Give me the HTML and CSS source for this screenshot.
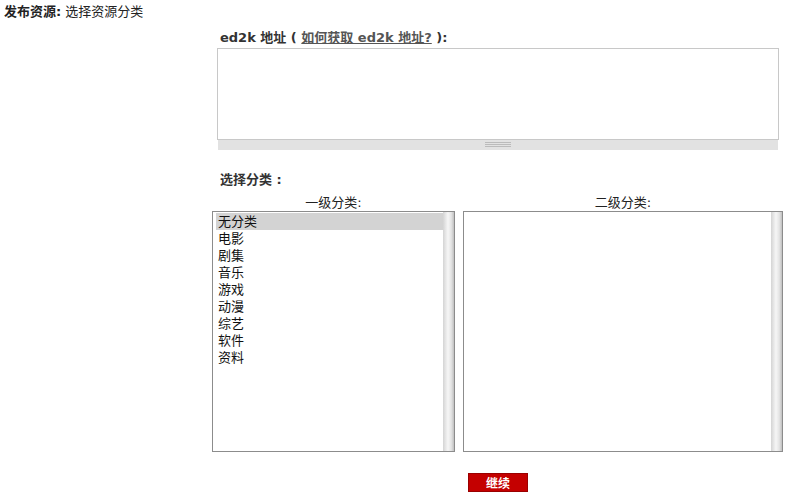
FILE: index.html
```html
<!DOCTYPE html>
<html lang="zh-CN">
<head>
    <meta charset="UTF-8">
    <title>发布资源</title>
    <link rel="stylesheet" href="styles.css">
</head>
<body>
    <div class="page-title"><b>发布资源:</b> 选择资源分类</div>

    <div class="form">
        <div class="label">ed2k 地址 ( <a href="#">如何获取 ed2k 地址?</a> ):</div>
        <div class="ed2k-box">
            <div class="ed2k-area"></div>
            <div class="grip"><span></span></div>
        </div>

        <div class="label cat-label">选择分类 :</div>

        <div class="cats">
            <div class="cat-col">
                <div class="cat-title">一级分类:</div>
                <div class="list first">
                    <div class="items">
                        <div class="item selected">无分类</div>
                        <div class="item">电影</div>
                        <div class="item">剧集</div>
                        <div class="item">音乐</div>
                        <div class="item">游戏</div>
                        <div class="item">动漫</div>
                        <div class="item">综艺</div>
                        <div class="item">软件</div>
                        <div class="item">资料</div>
                    </div>
                    <div class="scrollbar"></div>
                </div>
            </div>
            <div class="cat-col">
                <div class="cat-title">二级分类:</div>
                <div class="list second">
                    <div class="items"></div>
                    <div class="scrollbar"></div>
                </div>
            </div>
        </div>

        <div class="actions">
            <button class="next-button">继续</button>
        </div>
    </div>
</body>
</html>
```

FILE: styles.css
```css
body {
    margin: 0;
    font-family: "DejaVu Sans", "Noto Sans CJK SC", sans-serif;
    color: #222;
    background: #fff;
}

/* título da página */
.page-title {
    font-size: 13px;
    padding: 4px 4px 5px;
    line-height: 15px;
}

.form {
    margin-left: 212px;
    width: 570px;
}

.label {
    font-size: 13px;
    font-weight: bold;
    color: #333;
    padding-left: 8px;
    margin-top: 6px;
    line-height: 16px;
}

.label a {
    color: #555;
}

.ed2k-box {
    margin: 2px 0 0 5px;
    width: 562px;
}

.ed2k-area {
    height: 90px;
    border: 1px solid #c8c8c8;
    background: #fff;
}

.grip {
    height: 10px;
    margin: 0 1px;
    background: #e2e2e2;
    display: flex;
    justify-content: center;
    padding-top: 1px;
    box-sizing: border-box;
}

.grip span {
    width: 26px;
    height: 5px;
    border-top: 1px solid #bbb;
    border-bottom: 1px solid #bbb;
    box-sizing: border-box;
    background: linear-gradient(#e2e2e2 1px, #bbb 1px, #bbb 2px, #e2e2e2 2px);
    margin-top: 1px;
}

.cat-label {
    margin-top: 22px;
}

.cats {
    display: flex;
    gap: 8px;
    margin-top: 7px;
}

.cat-title {
    text-align: center;
    font-size: 13px;
    line-height: 16px;
    color: #222;
}

.list {
    height: 238px;
    border: 1px solid #8c8c8c;
    display: flex;
    padding: 1px 0 0 3px;
    box-sizing: content-box;
}

.list.first {
    width: 238px;
}

.list.second {
    width: 315px;
}

.items {
    flex: 1;
}

.item {
    font-size: 13px;
    line-height: 17px;
    padding-left: 2px;
    color: #111;
}

.item.selected {
    background: #d3d3d3;
}

.scrollbar {
    width: 11px;
    margin-top: -1px;
    background: linear-gradient(to right, #d4d4d4, #f6f6f6 45%, #e4e4e4 75%, #c0c0c0);
}

.actions {
    padding: 21px 0 0 256px;
}

.next-button {
    width: 60px;
    height: 19px;
    border: 1px solid #9a0000;
    background: #c40000;
    color: #fff;
    font-weight: bold;
    font-size: 12px;
    font-family: "DejaVu Sans", "Noto Sans CJK SC", sans-serif;
    padding: 0;
    cursor: pointer;
}
```
